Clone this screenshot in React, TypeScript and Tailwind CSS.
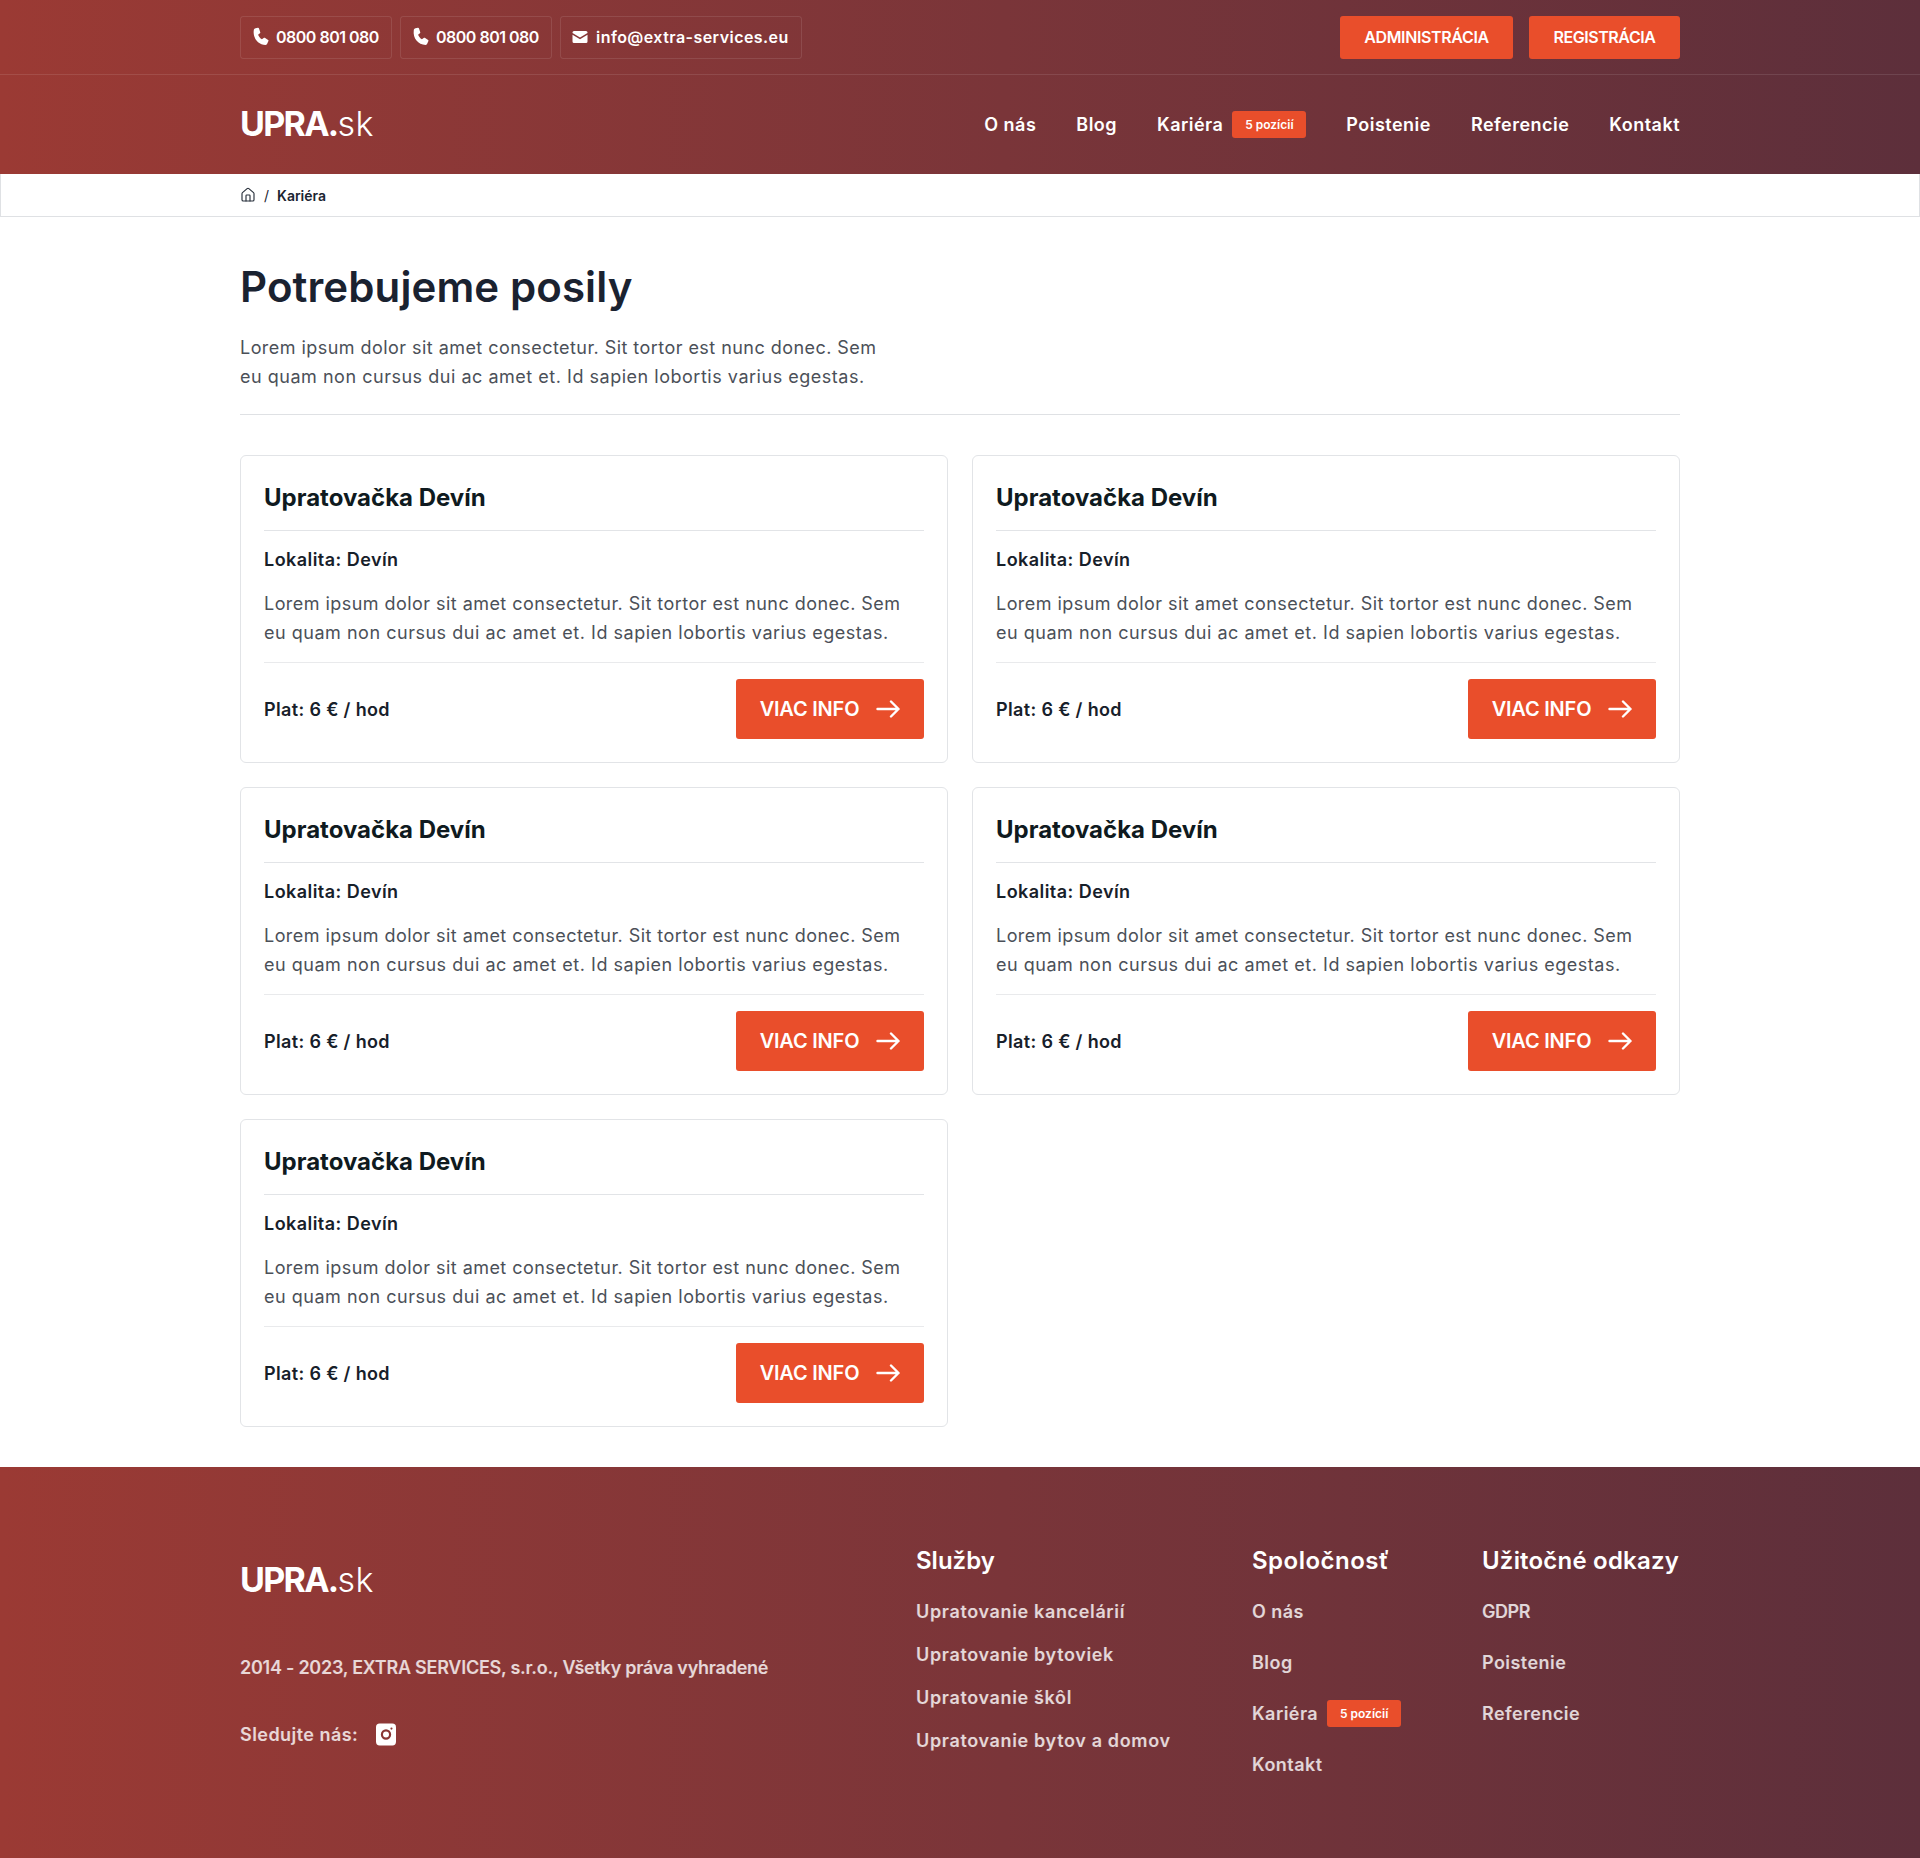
import React from 'react';
import { Home } from 'lucide-react';

const PhoneIcon: React.FC = () => (
  <svg viewBox="0 0 24 24" className="w-[20px] h-[20px] fill-white shrink-0">
    <path d="M6.6 1.6 9.5 1c.6-.1 1.1.2 1.3.7l1.5 4.6c.2.5 0 1-.4 1.300L9.700 9.300c.9 2.200 2.500 4.200 4.600 5.500l2.100-1.700c.4-.3 1-.4 1.400-.1l3.900 2.500c.5.300.7.900.4 1.400l-1.500 3.300c-.3.700-1 1.300-1.900 1.300C9.800 21 3.300 13.500 4.500 4.100c.1-1.200 1-2.200 2.100-2.500Z" />
  </svg>
);

const MailIcon: React.FC = () => (
  <svg viewBox="0 0 24 24" className="w-[18px] h-[18px] fill-white shrink-0">
    <path d="M4 4h16a2 2 0 0 1 2 2v.6l-10 6-10-6V6a2 2 0 0 1 2-2Zm18 5.100V18a2 2 0 0 1-2 2H4a2 2 0 0 1-2-2V9.100l10 6 10-6Z" />
  </svg>
);

const ArrowIcon: React.FC = () => (
  <svg viewBox="0 0 24 18" className="w-[24px] h-[18px] shrink-0 fill-none stroke-white" strokeWidth="2.400" strokeLinecap="round" strokeLinejoin="round">
    <path d="M1.500 9h21M15 1.500 22.500 9 15 16.500" />
  </svg>
);

const Logo: React.FC = () => (
  <div className="text-[34px] leading-[40px] text-white">
    <span className="font-bold tracking-[-1.7px]">UPRA.</span>
    <span className="font-light tracking-[0.4px]">sk</span>
  </div>
);

const Badge: React.FC = () => (
  <span className="inline-flex items-center justify-center w-[74px] h-[27px] rounded-[3px] bg-[#e94e2b] text-white text-[12px] font-semibold tracking-normal">
    5 pozícií
  </span>
);

const Chip: React.FC<{ icon: React.ReactNode; text: string; className: string }> = ({ icon, text, className }) => (
  <div className={`flex items-center h-[43px] border border-white/10 rounded-[3px] text-white text-[16px] font-semibold ${className}`}>
    {icon}
    <span>{text}</span>
  </div>
);

const Lorem: React.FC = () => (
  <>
    <span className="tracking-[0.45px]">Lorem ipsum dolor sit amet consectetur. Sit tortor est nunc donec. Sem</span>
    <br />
    eu quam non cursus dui ac amet et. Id sapien lobortis varius egestas.
  </>
);

const jobs = [1, 2, 3, 4, 5];

const JobCard: React.FC = () => (
  <div className="border border-[#e2e4e7] rounded-[6px] px-[23px] pt-[24px] pb-[23px]">
    <h2 className="text-[24px] leading-[36px] font-bold text-[#0f1a20] pb-[14px] border-b border-[#e2e4e7]">Upratovačka Devín</h2>
    <p className="mt-[14px] text-[18px] leading-[29px] font-semibold text-[#17202a] tracking-[0.45px]">Lokalita: Devín</p>
    <p className="mt-[15px] text-[18px] leading-[29px] text-[#4b5058] pb-[15px] border-b border-[#e9eaec] tracking-[0.52px]">
      <Lorem />
    </p>
    <div className="mt-[16px] flex items-center justify-between">
      <span className="text-[18px] font-semibold text-[#17202a] tracking-[0.35px]">Plat: 6 € / hod</span>
      <a className="flex items-center justify-center gap-[17px] w-[188px] h-[60px] rounded-[3px] bg-[#e94e2b] text-white text-[20px] font-semibold tracking-[-0.2px]">
        VIAC INFO
        <ArrowIcon />
      </a>
    </div>
  </div>
);

const footerLink = 'text-[18px] leading-[27px] font-semibold text-white/80 tracking-[0.45px]';
const serviceLink = 'text-[18px] leading-[27px] font-semibold text-white/80 tracking-[0.65px]';

const App: React.FC = () => {
  return (
    <div className="font-['Inter',sans-serif] bg-white min-h-[1858px]">
      <header className="bg-gradient-to-r from-[#9b3a34] to-[#5d2f3b]">
        <div className="h-[75px] border-b border-white/10">
          <div className="w-[1440px] mx-auto h-[74px] flex items-center justify-between">
            <div className="flex gap-[8px]">
              <Chip icon={<PhoneIcon />} text="0800 801 080" className="w-[152px] pl-[9px] gap-[6px] tracking-[-0.5px]" />
              <Chip icon={<PhoneIcon />} text="0800 801 080" className="w-[152px] pl-[9px] gap-[6px] tracking-[-0.5px]" />
              <Chip icon={<MailIcon />} text="info@extra-services.eu" className="w-[242px] pl-[10px] gap-[7px] tracking-[0.45px]" />
            </div>
            <div className="flex gap-[16px]">
              <a className="flex items-center justify-center w-[173px] h-[43px] rounded-[3px] bg-[#e94e2b] text-white text-[16px] font-semibold tracking-[-0.35px]">ADMINISTRÁCIA</a>
              <a className="flex items-center justify-center w-[151px] h-[43px] rounded-[3px] bg-[#e94e2b] text-white text-[16px] font-semibold tracking-[-0.45px]">REGISTRÁCIA</a>
            </div>
          </div>
        </div>
        <div className="w-[1440px] mx-auto h-[99px] flex items-center justify-between">
          <div className="pb-[2px]">
            <Logo />
          </div>
          <nav className="flex items-center gap-[40px] text-white text-[18px] font-semibold tracking-[0.48px]">
            <a>O nás</a>
            <a>Blog</a>
            <span className="flex items-center gap-[9px]">
              <a>Kariéra</a>
              <Badge />
            </span>
            <a>Poistenie</a>
            <a>Referencie</a>
            <a>Kontakt</a>
          </nav>
        </div>
      </header>

      <div className="h-[43px] border border-[#dfe1e4] border-t-0">
        <div className="w-[1440px] mx-auto h-full flex items-center gap-[8px] text-[14px] font-semibold text-[#1b2430]">
          <Home className="w-[16px] h-[16px] text-[#2b333e]" strokeWidth={1.75} />
          <span className="font-normal">/</span>
          <span>Kariéra</span>
        </div>
      </div>

      <main className="w-[1440px] mx-auto pt-[43px] pb-[40px]">
        <h1 className="text-[42px] leading-[54px] font-semibold text-[#1a2230] tracking-[0.1px]">Potrebujeme posily</h1>
        <div className="mt-[19px] pb-[23px] border-b border-[#dfe1e4]">
          <p className="text-[18px] leading-[29px] text-[#4b5058] tracking-[0.52px]">
            <Lorem />
          </p>
        </div>
        <div className="mt-[40px] grid grid-cols-2 gap-x-[24px] gap-y-[24px]">
          {jobs.map((id) => (
            <JobCard key={id} />
          ))}
        </div>
      </main>

      <footer className="bg-gradient-to-r from-[#9b3a34] to-[#5d2f3b] h-[391px]">
        <div className="w-[1440px] mx-auto flex pt-[76px]">
          <div className="w-[676px] pt-[17px]">
            <Logo />
            <p className="mt-[54px] text-[18px] leading-[27px] font-semibold text-white/80 tracking-[-0.25px]">2014 - 2023, EXTRA SERVICES, s.r.o., Všetky práva vyhradené</p>
            <div className="mt-[40px] flex items-center gap-[18px]">
              <span className={footerLink}>Sledujte nás:</span>
              <svg viewBox="0 0 22 24" className="w-[20px] h-[23px]">
                <rect width="22" height="24" rx="4" fill="#fff" />
                <circle cx="11" cy="12" r="4.500" fill="none" stroke="#8a3634" strokeWidth="2.400" />
                <circle cx="17" cy="5.500" r="1.200" fill="#8a3634" />
              </svg>
            </div>
          </div>
          <div className="w-[336px]">
            <h3 className="text-[24px] leading-[36px] font-semibold text-white">Služby</h3>
            <div className="mt-[19px] flex flex-col gap-[16px]">
              <a className={serviceLink}>Upratovanie kancelárií</a>
              <a className={serviceLink}>Upratovanie bytoviek</a>
              <a className={serviceLink}>Upratovanie škôl</a>
              <a className={serviceLink}>Upratovanie bytov a domov</a>
            </div>
          </div>
          <div className="w-[230px]">
            <h3 className="text-[24px] leading-[36px] font-semibold text-white tracking-[0.5px]">Spoločnosť</h3>
            <div className="mt-[19px] flex flex-col gap-[24px]">
              <a className={footerLink}>O nás</a>
              <a className={footerLink}>Blog</a>
              <span className="flex items-center gap-[9px] h-[27px]">
                <a className={footerLink}>Kariéra</a>
                <Badge />
              </span>
              <a className={footerLink}>Kontakt</a>
            </div>
          </div>
          <div>
            <h3 className="text-[24px] leading-[36px] font-semibold text-white tracking-[0.2px]">Užitočné odkazy</h3>
            <div className="mt-[19px] flex flex-col gap-[24px]">
              <a className="text-[18px] leading-[27px] font-semibold text-white/80 tracking-[-0.45px]">GDPR</a>
              <a className={footerLink}>Poistenie</a>
              <a className={footerLink}>Referencie</a>
            </div>
          </div>
        </div>
      </footer>
    </div>
  );
};

export default App;
